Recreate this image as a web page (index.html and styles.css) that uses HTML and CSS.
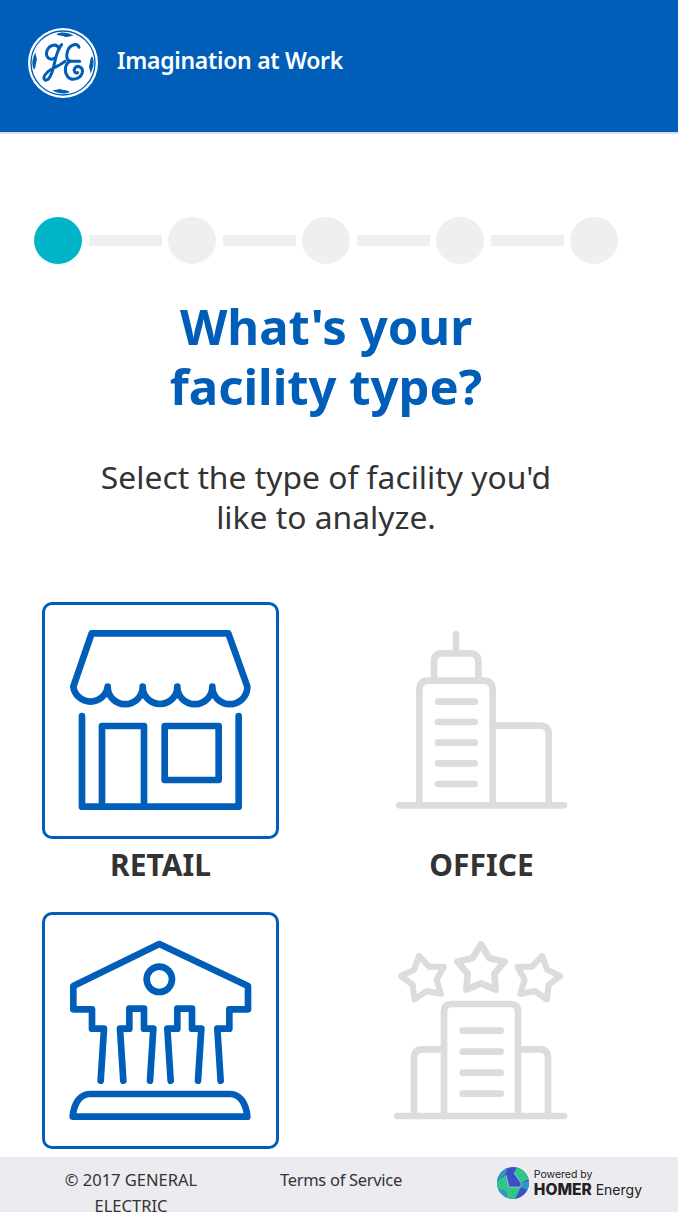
FILE: index.html
```html
<!DOCTYPE html>
<html lang="en">
<head>
<meta charset="utf-8">
<title>Imagination at Work</title>
<link rel="stylesheet" href="styles.css">
</head>
<body>
<header class="topbar">
  <svg class="ge-logo" viewBox="23 40 210 210" aria-label="GE logo">
    <circle cx="128" cy="145" r="105" fill="#fff"/>
    <circle cx="128" cy="145" r="96" fill="none" stroke="#005EB8" stroke-width="4"/>
    <g fill="#005EB8">
      <path d="M108 58 C122 50 142 52 160 63 C150 62 142 69 134 66 C124 62 116 65 108 58Z"/>
      <path transform="rotate(90 128 145)" d="M108 58 C122 50 142 52 160 63 C150 62 142 69 134 66 C124 62 116 65 108 58Z"/>
      <path transform="rotate(180 128 145)" d="M108 58 C122 50 142 52 160 63 C150 62 142 69 134 66 C124 62 116 65 108 58Z"/>
      <path transform="rotate(270 128 145)" d="M108 58 C122 50 142 52 160 63 C150 62 142 69 134 66 C124 62 116 65 108 58Z"/>
    </g>
    <g fill="none" stroke="#005EB8" stroke-width="9" stroke-linecap="round" stroke-linejoin="round">
      <path d="M116 102 C110 86 88 88 80 108 C74 126 88 140 104 130"/>
      <path d="M124 90 C110 104 106 130 100 156 C94 182 84 200 74 196 C64 190 78 170 100 160 C112 154 124 148 134 140"/>
      <path d="M176 98 C172 84 150 88 142 108 C136 126 140 138 150 140 H178"/>
      <path d="M150 140 C134 146 130 170 142 186 C154 200 180 194 186 174 C190 158 172 150 164 160 C158 168 164 178 172 174"/>
    </g>
  </svg>
  <span class="tagline">Imagination at Work</span>
</header>

<main class="content">
  <ol class="stepper">
    <li class="step step-active"></li>
    <li class="step-line"></li>
    <li class="step"></li>
    <li class="step-line"></li>
    <li class="step"></li>
    <li class="step-line"></li>
    <li class="step"></li>
    <li class="step-line"></li>
    <li class="step"></li>
  </ol>

  <h1 class="title">What's your<br>facility type?</h1>
  <p class="lead">Select the type of facility you'd<br>like to analyze.</p>

  <div class="options">
    <div class="option">
      <div class="tile tile-selected">
        <svg class="tile-icon" viewBox="75 45 693 693">
          <g class="line-blue">
            <path d="M160 290 L215 130 H625 L682 290 A52 52 0 0 1 577 290 A52 52 0 0 1 472 290 A52 52 0 0 1 368 290 A52 52 0 0 1 263 290 A52 52 0 0 1 160 290Z"/>
            <path d="M186 378 V650 H656 V378"/>
            <path d="M246 650 V408 H372 V650"/>
            <path d="M434 408 H596 V570 H434Z"/>
          </g>
        </svg>
      </div>
      <div class="option-label">RETAIL</div>
    </div>
    <div class="option">
      <div class="tile">
        <svg class="tile-icon tile-icon-off" viewBox="-12 -15 693 693">
          <g class="line-grey">
            <path d="M88 586 H582"/>
            <path d="M148 586 V240 Q148 212 176 212 H340 Q368 212 368 240 V586"/>
            <path d="M192 212 V155 Q192 130 217 130 H300 Q325 130 325 155 V212"/>
            <path d="M258 72 V130"/>
            <path d="M204 275 H314 M204 336 H314 M204 398 H314 M204 460 H314 M204 522 H314"/>
            <path d="M368 347 H510 Q536 347 536 373 V586"/>
          </g>
        </svg>
      </div>
      <div class="option-label">OFFICE</div>
    </div>
    <div class="option">
      <div class="tile tile-selected">
        <svg class="tile-icon" viewBox="75 45 693 693">
          <g class="line-blue">
            <path d="M242 542 L252 386 H216 V328 H160 V258 L418 132 L684 258 V328 H628 V386 H592 L602 542"/>
            <path d="M310 542 L300 386 H328 V326 H372 V386 H400 L390 542"/>
            <path d="M452 542 L442 386 H472 V326 H516 V386 H544 L534 542"/>
            <circle cx="418" cy="238" r="38"/>
            <path d="M158 650 H682 C678 610 660 582 630 582 H210 C180 582 162 610 158 650Z"/>
          </g>
        </svg>
      </div>
    </div>
    <div class="option">
      <div class="tile">
        <svg class="tile-icon tile-icon-off" viewBox="-12 -15 693 693">
          <g class="line-grey">
            <path d="M82 588 H582"/>
            <path d="M222 588 V275 Q222 252 245 252 H420 Q444 252 444 275 V588"/>
            <path d="M222 388 H158 Q132 388 132 414 V588"/>
            <path d="M444 388 H510 Q534 388 534 414 V588"/>
            <path d="M278 332 H392 M278 395 H392 M278 458 H392 M278 521 H392"/>
            <polygon points="333,73 358,114 404,125 373,161 377,209 333,190 289,209 293,161 262,125 308,114"/>
            <polygon transform="translate(-172 27) rotate(-12 333 148) translate(27 12) scale(.92)" points="333,73 358,114 404,125 373,161 377,209 333,190 289,209 293,161 262,125 308,114"/>
            <polygon transform="translate(169 27) rotate(12 333 148) translate(27 12) scale(.92)" points="333,73 358,114 404,125 373,161 377,209 333,190 289,209 293,161 262,125 308,114"/>
          </g>
        </svg>
      </div>
    </div>
  </div>
</main>

<footer class="footer">
  <div class="copyright">© 2017 GENERAL ELECTRIC</div>
  <a class="terms">Terms of Service</a>
  <div class="homer">
    <svg class="homer-mark" viewBox="0 0 32 32" aria-label="HOMER Energy logo">
      <defs><clipPath id="homer-clip"><circle cx="16" cy="16" r="16"/></clipPath></defs>
      <g clip-path="url(#homer-clip)">
        <rect width="32" height="32" fill="#3C4FC7"/>
        <polygon points="0,0 11,0 8,8 0,14" fill="#2E9AC4"/>
        <polygon points="20,0 32,0 32,12 24,16 17,6" fill="#33C38C"/>
        <polygon points="0,14 9,8 12,20 24,20 18,32 10,32 9,24 0,22" fill="#33C38C"/>
        <polygon points="24,16 32,14 32,24 24,20" fill="#2E9AC4"/>
        <polygon points="0,22 9,24 10,32 0,32" fill="#2E9AC4"/>
        <path d="M9 8 L12 20 L24 20 M17 6 L24 16 L24 20" fill="none" stroke="#EBEBF0" stroke-width=".5"/>
      </g>
    </svg>
    <div class="homer-text">
      <div class="homer-small">Powered by</div>
      <div class="homer-name"><b>HOMER</b> Energy</div>
    </div>
  </div>
</footer>
</body>
</html>
```
FILE: styles.css
```css
* { box-sizing: border-box; }
html, body { margin: 0; height: 100%; }
body {
  height: 1212px;
  overflow: hidden;
  display: flex;
  flex-direction: column;
  background: #fff;
  font-family: "Noto Sans", "Open Sans", sans-serif;
  color: #333;
}
.topbar {
  flex: none;
  height: 134px;
  background: #005EB8;
  border-bottom: 2px solid #CFE0F2;
  display: flex;
  align-items: center;
  padding: 0 0 6px 28px;
  gap: 19px;
}
.ge-logo { width: 70px; height: 70px; }
.tagline {
  color: #fff;
  font-size: 23px;
  font-weight: 600;
  letter-spacing: -0.3px;
  padding-bottom: 6px;
}
.content {
  flex: 1;
  min-height: 0;
  overflow: hidden;
  padding-top: 83px;
}
.stepper {
  list-style: none;
  margin: 0;
  padding: 0 0 0 34px;
  display: flex;
  align-items: center;
}
.step { width: 48px; height: 47px; flex: none; border-radius: 50%; background: #EFEEF0; }
.step-active { background: #00B5C8; }
.step-line { width: 73px; height: 11px; flex: none; margin: 0 6px 0 7px; background: #EFEEF0; }
.title {
  margin: 32px 0 0;
  width: 652px;
  text-align: center;
  color: #005EB8;
  font-size: 49px;
  line-height: 60px;
  font-weight: 700;
}
.lead {
  margin: 41px 0 0;
  width: 652px;
  text-align: center;
  font-size: 31.8px;
  line-height: 40px;
  color: #333;
}
.options {
  margin-top: 65px;
  width: 642px;
  display: grid;
  grid-template-columns: 321px 321px;
}
.option {
  display: flex;
  flex-direction: column;
  align-items: center;
  height: 310px;
}
.tile {
  width: 237px;
  height: 237px;
  flex: none;
  border: 3px solid transparent;
  border-radius: 10px;
}
.tile-selected { border-color: #005EB8; }
.tile-icon { display: block; width: 100%; height: 100%; filter: blur(0.35px); }
.tile-icon-off { filter: blur(0.6px); }
.line-blue, .line-grey {
  fill: none;
  stroke-width: 20;
  stroke-linecap: round;
  stroke-linejoin: round;
}
.line-blue { stroke: #005EB8; }
.line-grey { stroke: #DCDCDC; }
.option-label {
  margin-top: 8px;
  font-size: 30px;
  line-height: 36px;
  font-weight: 700;
  color: #333;
}
.footer {
  flex: none;
  height: 55px;
  background: #EBEBF0;
  display: flex;
  align-items: flex-start;
  font-size: 16.5px;
  line-height: 26px;
  color: #333;
}
.copyright {
  width: 150px;
  margin: 10px 0 0 56px;
  text-align: center;
}
.terms { margin: 10px 0 0 74px; letter-spacing: -0.3px; white-space: nowrap; }
.homer {
  margin: 10px 0 0 auto;
  padding-right: 36px;
  display: flex;
  align-items: center;
  gap: 5px;
}
.homer-mark { width: 32px; height: 32px; flex: none; }
.homer-text { font-family: Inter, sans-serif; color: #222; }
.homer-small { font-size: 10.5px; line-height: 12px; }
.homer-name { font-size: 14px; line-height: 17px; white-space: nowrap; }
.homer-name b { font-weight: 800; font-size: 15.5px; }
```
